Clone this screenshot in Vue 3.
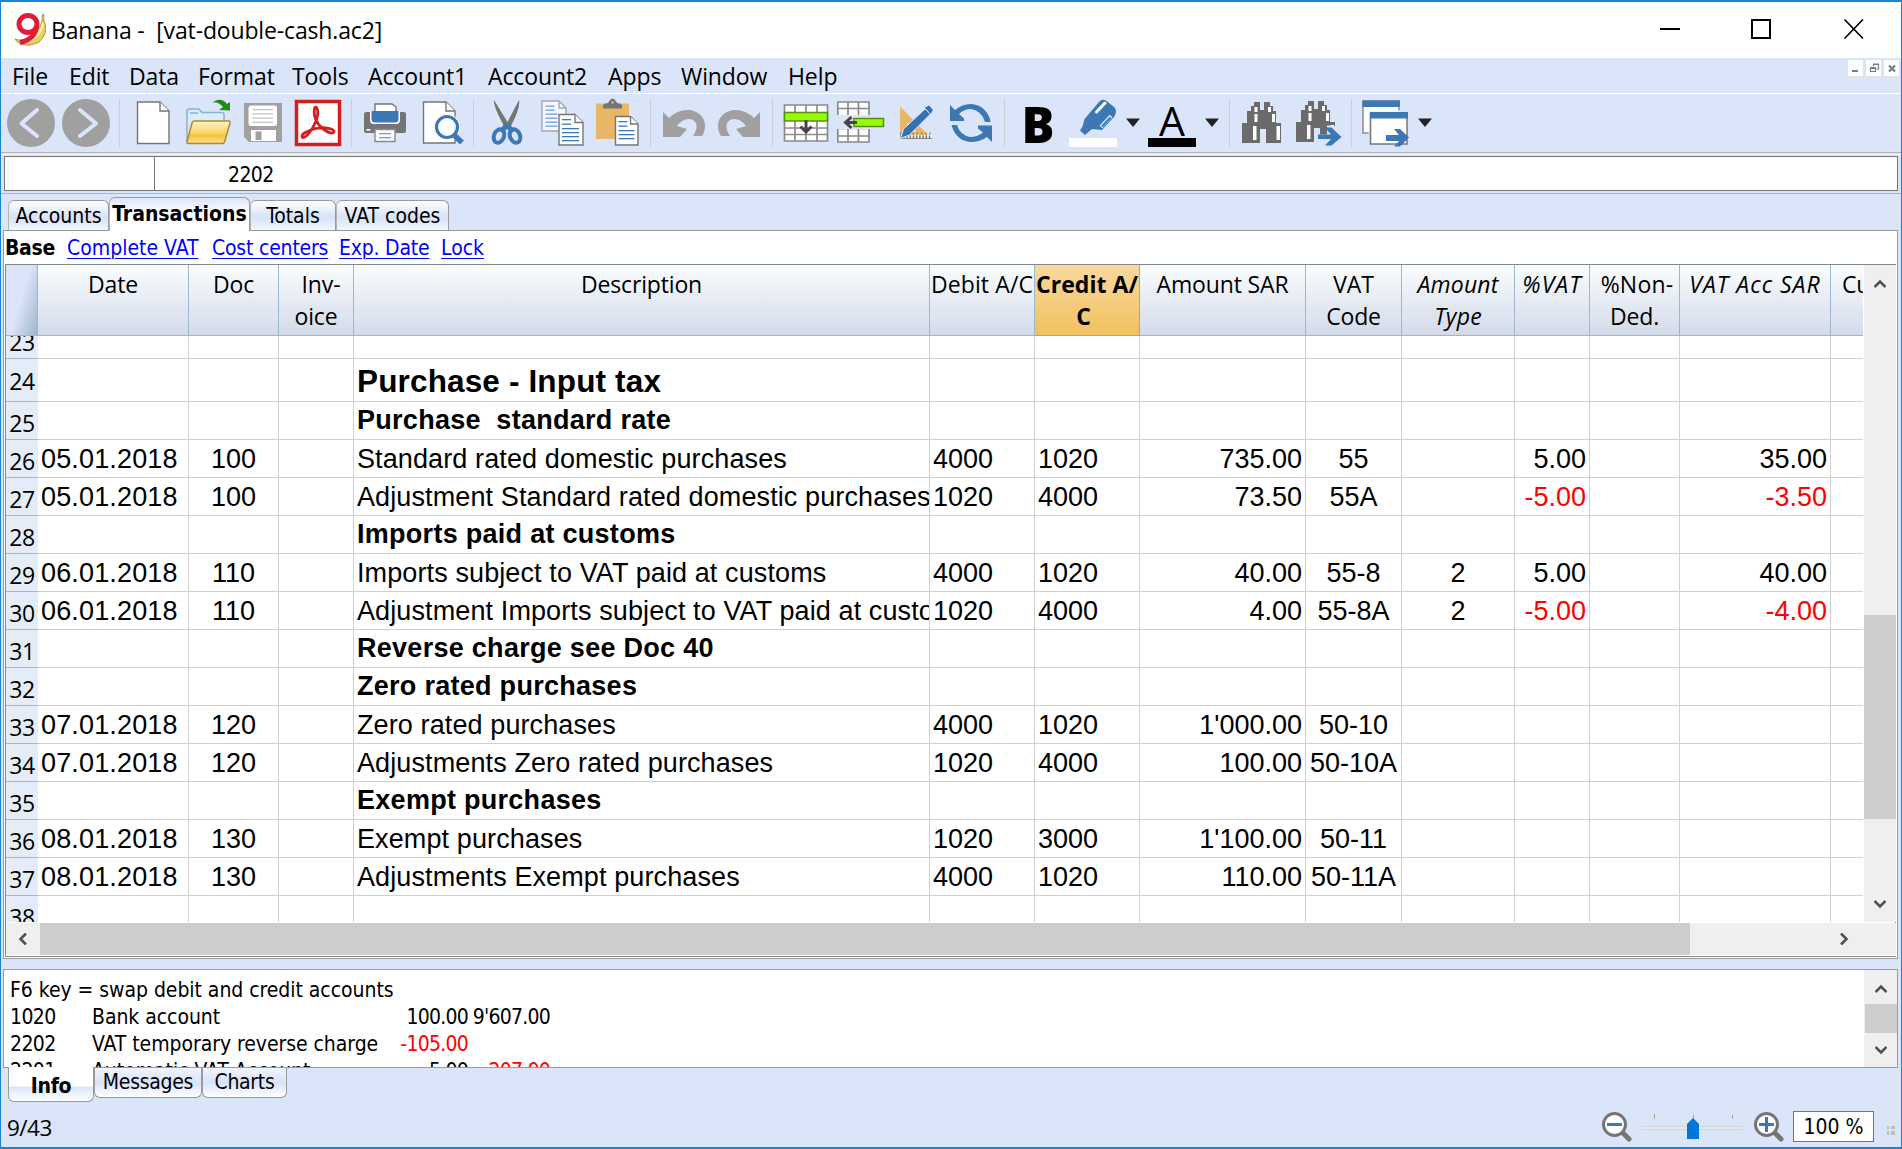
<script setup>
const menus = [
  { label: 'File', w: 57 }, { label: 'Edit', w: 60 }, { label: 'Data', w: 69 }, { label: 'Format', w: 94 },
  { label: 'Tools', w: 76 }, { label: 'Account1', w: 120 }, { label: 'Account2', w: 120 }, { label: 'Apps', w: 73 },
  { label: 'Window', w: 107 }, { label: 'Help', w: 60 }
]

const page = 'fill="#fff" stroke="#757575" stroke-width="1.4"'
const lines = (x, y, w, n, step, c = '#3c78b4') =>
  Array.from({ length: n }, (_, i) => `<rect x="${x}" y="${y + i * step}" width="${w}" height="1.3" fill="${c}"/>`).join('')
const binoculars = `
  <path fill="#6b6b6b" d="M15 4h6v4h3V4h0h7v4h3v5h3v12h5v20H27V31h-6v14H3V25h5V13h4V8h3z"/>
  <path fill="#dbe5f9" d="M21 3h4v9h-4z"/>
  <path fill="#fff" d="M15.500 9h3v5h-3zM29 9h3v5h-3zM15.500 16h3v8h-3zM33 16h3v8h-3zM14 28h3.500v14h-3.500zM37.500 28h3.500v14h-3.500z"/>`
const lens = (x, y, r) => `<circle cx="${x}" cy="${y}" r="${r}" fill="#fff" stroke="#3c78b4" stroke-width="3.2"/>`

const groups = [
  [
    { svg: '<circle cx="24" cy="24" r="24" fill="#a0a0a0"/><path d="M30 11L14.500 24.500L30 37" fill="none" stroke="#dbe5f9" stroke-width="4" stroke-linecap="round" stroke-linejoin="round"/>' },
    { svg: '<circle cx="24" cy="24" r="24" fill="#a0a0a0"/><path d="M18 11L34 24.500L18 37" fill="none" stroke="#dbe5f9" stroke-width="4" stroke-linecap="round" stroke-linejoin="round"/>' }
  ],
  [
    { svg: `<path d="M8.500 3H31L40 12V44.500H8.500z" ${page}/><path d="M31 3V12H40" ${page}/>` },
    { svg: `<defs><linearGradient id="fold" x1="0" y1="0" x2="0" y2="1"><stop offset="0" stop-color="#fdf3c4"/><stop offset=".5" stop-color="#fbd873"/><stop offset=".65" stop-color="#f5c33c"/><stop offset="1" stop-color="#fbe08c"/></linearGradient></defs>
      <path d="M3 12q0-2 2-2h10l3 3.500h20q2 0 2 2V43H3z" fill="#d8ecfb" stroke="#8fb0d0" stroke-width="1.500"/>
      <path d="M6 14h8" stroke="#8fc3f5" stroke-width="2"/>
      <path d="M10 22h35q1.500 0 1 2L40.500 43q-.5 1.500-2 1.500H4q-1.500 0-1-2L8 24q.5-2 2-2z" fill="url(#fold)" stroke="#b08a33" stroke-width="1.500"/>
      <path d="M28 3.500Q37-2.500 43 5L46 3V11.500L35 11L39 8Q34 2 28 3.500z" fill="#1f8a14"/>` },
    { svg: `<path d="M5 4H43V43H10L5 38z" fill="#a0a0a0"/><rect x="9.500" y="6.500" width="28.500" height="20.500" rx="2.500" fill="#fff"/>${lines(13.5, 10, 20.5, 4, 4.2, '#c4c4c4')}
      <rect x="12" y="31" width="25" height="11" fill="#fff"/><rect x="16.500" y="32.500" width="6" height="8.500" fill="#a0a0a0"/>` },
    { svg: `<rect x="2.500" y="2.500" width="43" height="43" fill="#fff" stroke="#d2201f" stroke-width="3.500"/>
      <path d="M20.500 9.500C22 5 26 12 22 22C18 32 12 39 8.500 38.500C6 36 12 32 21.500 29.500C31 27.500 41 30 40 33C38 36 30 32 25 26C20 19 19.500 14 20.500 9.500z" fill="none" stroke="#d2201f" stroke-width="2.800" stroke-linejoin="round"/>` }
  ],
  [
    { svg: `<path d="M14 14V5h17l4 3v6" fill="#fff" stroke="#757575" stroke-width="1.400"/><path d="M3 15q0-2 2-2H43q2 0 2 2V32q0 2-2 2H5q-2 0-2-2z" fill="#757575"/>
      <path d="M9 12H39V21q0 4-4 4H13q-4 0-4-4z" fill="#fff"/><path d="M10.500 12H37.500V20q0 3.500-3.500 3.500H14q-3.500 0-3.500-3.500z" fill="#3c78b4"/>
      <path d="M14 30.500H34V42.500H14z" fill="#fff" stroke="#8a8a8a" stroke-width="1.400"/>${lines(18, 34, 12, 2, 4, '#6f9fd0')}<rect x="5.500" y="30" width="4" height="1.600" fill="#fff"/>` },
    { svg: `<path d="M7.500 3H30L39 12V44H7.500z" ${page}/><path d="M30 3V12H39" ${page}/><circle cx="31" cy="28" r="13" fill="#fff"/>${lens(31, 28, 10.5)}<path d="M38.500 36.500L46 43.500" stroke="#3c78b4" stroke-width="5.500"/>` }
  ],
  [
    { svg: `<path d="M11 1Q10 7 22 29L27 29Q38 8 36 1L24.500 23z" fill="#757575"/><path d="M24 26L18 33M24 26L30 33" stroke="#3c78b4" stroke-width="5"/>
      <ellipse cx="16" cy="37" rx="5" ry="7" transform="rotate(22 16 37)" fill="none" stroke="#3c78b4" stroke-width="4"/><ellipse cx="32" cy="37" rx="5" ry="7" transform="rotate(-22 32 37)" fill="none" stroke="#3c78b4" stroke-width="4"/>` },
    { svg: `<path d="M4 2H21L28 9V32H4z" fill="#f4f7fd" stroke="#a0a8b8" stroke-width="1.400"/><path d="M21 2V9H28" fill="none" stroke="#a0a8b8" stroke-width="1.400"/>${lines(7.5, 6.5, 9, 2, 4, '#6f9fd0')}${lines(7.5, 14.5, 12, 4, 4, '#6f9fd0')}
      <path d="M21 15.500H37L45 23.500V46H21z" ${page}/><path d="M37 15.500V23.500H45" ${page}/>${lines(24, 20, 9, 2, 4.5)}${lines(24, 29, 17, 4, 4)}` },
    { svg: `<path d="M3 4.500H36V40H3z" fill="#e9b566"/><path d="M10 9.500V7q0-2 3-2.500q2 0 3-2q1.500-3 3.500-3t3.500 3q1 2 3 2q3 .5 3 2.500V9.500z" fill="#757575"/><circle cx="19.500" cy="3.500" r="1.300" fill="#e9b566"/>
      <path d="M22.500 17.500H37.500L45 25V46H22.500z" ${page}/><path d="M37.500 17.500V25H45" ${page}/>${lines(25.5, 22, 9, 2, 4.5)}${lines(25.5, 31, 16, 3, 4)}` }
  ],
  [
    { svg: '<path d="M3 13L9 19Q18 10 30 11Q44 14 45 26Q45 33 42 37H33Q37 31 36.500 26Q35 20 29 20Q22 20 17 27L27 30L20 38H3z" fill="#a0a0a0"/>' },
    { svg: '<path transform="translate(48 0) scale(-1 1)" d="M3 13L9 19Q18 10 30 11Q44 14 45 26Q45 33 42 37H33Q37 31 36.500 26Q35 20 29 20Q22 20 17 27L27 30L20 38H3z" fill="#a0a0a0"/>' }
  ],
  [
    { svg: `<rect x="2.500" y="6" width="43" height="36" fill="#fff"/><path d="M2.500 6H45.500V42H2.500zM13 6V42M24 6V42M35 6V42M2.500 29H45.500M2.500 35.500H45.500" fill="none" stroke="#8a8a8a" stroke-width="1.700"/>
      <rect x="2.500" y="13.500" width="43" height="8.500" fill="#96fa0a" stroke="#569010" stroke-width="1.500"/><path d="M24 21V32M18.500 27.500L24 33L29.500 27.500" fill="none" stroke="#444" stroke-width="3"/>` },
    { svg: `<path d="M0 3H32V16H0zM0 31H32V43H0z" fill="#fff"/><path d="M.8 16V3H32V16M.8 9.500H32M11 3V16M21.500 3V16M.8 30V43H32V30M.8 37H32M11 30V43M21.500 30V43" fill="none" stroke="#8a8a8a" stroke-width="1.700"/>
      <rect x="17" y="19.500" width="29.500" height="8" fill="#96fa0a" stroke="#569010" stroke-width="1.500"/><path d="M20 23.500H9M14.500 18L8.500 23.500L14.500 29" fill="none" stroke="#444" stroke-width="3"/>` },
    { svg: `<path d="M8 7.500V40H40zM15 23.500V33H24z" fill="#e9b566" fill-rule="evenodd"/><path d="M8 34.500H40" stroke="#757575" stroke-width="2" stroke-dasharray="1.200 3"/><path d="M8 36.500H40V40H8z" fill="#757575"/><path d="M9.500 37.500H40" stroke="#fff" stroke-width="3.500" stroke-dasharray="1.600 1.600"/>
      <path d="M8.500 39.500L11.500 30L33 10L38.500 15L17.500 36z" fill="#3472b2" stroke="#dbe5f9" stroke-width="1"/><path d="M34 9L37 7.500L40 11L38.500 13.500z" fill="#3472b2" stroke="#3472b2" stroke-width="1.500"/>` },
    { svg: `<path d="M3 6L8 11Q15 5 24 5Q38 6 43 20L43.500 23H38Q35 12 24 10Q17 10 12 15L17 19.500V22H3z" fill="#3c78b4"/>
      <path d="M45 43L40 38Q33 43 24 43Q9 42 4.500 26H10Q13 36 23 38Q30 38 36 33.500L31 29.500V26.500H45z" fill="#3c78b4"/>` }
  ],
  [
    { letter: 'B', kind: 'bold' },
    { menu: true, svg: '<path d="M30 3Q33-.5 37 1.500L45 8Q48 11 46.500 15L45 18L33 31L23 30L16 36L11 31.500L13.500 27.500L15.500 20z" fill="#3c78b4"/><path d="M27.500 13L36 4" stroke="#fff" stroke-width="3" stroke-linecap="round"/><path d="M32 28L42 17" stroke="#dbe5f9" stroke-width="4"/><path d="M33 27.500L41.500 18.500" stroke="#3c78b4" stroke-width="2"/><rect x="0" y="39" width="48" height="9" fill="#fff"/>' },
    { menu: true, letter: 'A', kind: 'ink' }
  ],
  [
    { svg: `<g transform="translate(0 -1)">${binoculars}</g>` },
    { svg: `<g transform="translate(-1 -2)">${binoculars}</g><path d="M22 35.500H33V26.500H40L50 37.500L40 48H28L22 43z" fill="#dbe5f9"/><path d="M24 35.500H37L31 28.500H37.500L47.500 38L37.500 46.500H31L37 40H24z" fill="#3c78b4"/>` }
  ],
  [
    { menu: true, svg: `<rect x="2" y="2" width="36" height="32" fill="#fff" stroke="#8a8a8a" stroke-width="1.500"/><rect x="1.500" y="1.500" width="37.500" height="6.500" fill="#3c78b4"/>
      <rect x="7.500" y="11.500" width="32" height="23" fill="#eef3fc"/><rect x="9.500" y="14.500" width="36.500" height="30.500" fill="#fff" stroke="#757575" stroke-width="1.500"/><rect x="9" y="13" width="38" height="6.500" fill="#3c78b4"/>
      <path d="M25 36H38L33 30H39L48 38.500L39 47.500H33L38 42H25z" fill="#3c78b4"/>` }
  ]
]

const tabs = [
  { label: 'Accounts', w: 101 }, { label: 'Transactions', w: 141, active: true }, { label: 'Totals', w: 86 }, { label: 'VAT codes', w: 113 }
]
const views = [{ label: 'Complete VAT', w: 145 }, { label: 'Cost centers', w: 127, tight: true }, { label: 'Exp. Date', w: 102, tight: true }, { label: 'Lock', w: 50 }]

const columns = [
  { key: 'date', head: ['Date'], w: 151, align: 'left' },
  { key: 'doc', head: ['Doc'], w: 90, align: 'center' },
  { key: 'inv', head: ['Inv-', 'oice'], w: 75, align: 'center' },
  { key: 'desc', head: ['Description'], w: 576, align: 'left' },
  { key: 'debit', head: ['Debit A/C'], w: 105, align: 'left' },
  { key: 'credit', head: ['Credit A/', 'C'], w: 105, align: 'left', selected: true },
  { key: 'amount', head: ['Amount SAR'], w: 166, align: 'right' },
  { key: 'code', head: ['VAT', 'Code'], w: 96, align: 'center' },
  { key: 'type', head: ['Amount', 'Type'], w: 113, align: 'center', italic: true },
  { key: 'pct', head: ['%VAT'], w: 75, align: 'right', italic: true },
  { key: 'non', head: ['%Non-', 'Ded.'], w: 90, align: 'right' },
  { key: 'acc', head: ['VAT Acc SAR'], w: 151, align: 'right', italic: true },
  { key: 'cur', head: ['Cu'], w: 32, align: 'left' }
]

const rows = [
  { n: 23, first: true },
  { n: 24, desc: 'Purchase - Input tax', big: true },
  { n: 25, desc: 'Purchase\u00a0 standard rate', bold: true },
  { n: 26, date: '05.01.2018', doc: '100', desc: 'Standard rated domestic purchases', debit: '4000', credit: '1020', amount: '735.00', code: '55', pct: '5.00', acc: '35.00' },
  { n: 27, date: '05.01.2018', doc: '100', desc: 'Adjustment Standard rated domestic purchases', debit: '1020', credit: '4000', amount: '73.50', code: '55A', pct: '-5.00', acc: '-3.50' },
  { n: 28, desc: 'Imports paid at customs', bold: true },
  { n: 29, date: '06.01.2018', doc: '110', desc: 'Imports subject to VAT paid at customs', debit: '4000', credit: '1020', amount: '40.00', code: '55-8', type: '2', pct: '5.00', acc: '40.00' },
  { n: 30, date: '06.01.2018', doc: '110', desc: 'Adjustment Imports subject to VAT paid at customs', debit: '1020', credit: '4000', amount: '4.00', code: '55-8A', type: '2', pct: '-5.00', acc: '-4.00' },
  { n: 31, desc: 'Reverse charge see Doc 40', bold: true },
  { n: 32, desc: 'Zero rated purchases', bold: true },
  { n: 33, date: '07.01.2018', doc: '120', desc: 'Zero rated purchases', debit: '4000', credit: '1020', amount: "1'000.00", code: '50-10' },
  { n: 34, date: '07.01.2018', doc: '120', desc: 'Adjustments Zero rated purchases', debit: '1020', credit: '4000', amount: '100.00', code: '50-10A' },
  { n: 35, desc: 'Exempt purchases', bold: true },
  { n: 36, date: '08.01.2018', doc: '130', desc: 'Exempt purchases', debit: '1020', credit: '3000', amount: "1'100.00", code: '50-11' },
  { n: 37, date: '08.01.2018', doc: '130', desc: 'Adjustments Exempt purchases', debit: '4000', credit: '1020', amount: '110.00', code: '50-11A' },
  { n: 38 }
]

const info = [
  ['1020', 'Bank account', '100.00', "9'607.00"],
  ['2202', 'VAT temporary reverse charge', '-105.00', ''],
  ['2201', 'Automatic VAT Account', '5.00', '-207.00']
]
const negative = (v) => typeof v === 'string' && /^-\d/.test(v)
</script>

<template>
  <div class="window">
    <header class="titlebar">
      <svg class="logo" width="32" height="33" viewBox="0 0 32 33">
        <path d="M28.500 1l1.500 1q-1 5 1 9q3 10-6 18q-9 5-18 2q-4-1-6-5q8 3 14-2q12-8 13-16z" fill="#e8d25c" stroke="#9c8430" stroke-width=".8" />
        <path d="M29 10Q27 24 12 30" fill="none" stroke="#fbf3b0" stroke-width="2" />
        <path d="M22.500 12Q22 26 6 29.500" fill="none" stroke="#e01c38" stroke-width="5" />
        <ellipse cx="14" cy="11" rx="9" ry="8.500" fill="#fff" stroke="#e01c38" stroke-width="5" />
      </svg>
      <span class="caption">Banana - &nbsp;[vat-double-cash.ac2]</span>
      <svg class="winbtns" width="204" height="20" viewBox="0 0 204 20">
        <path d="M0 10H20M92 1H110V19H92z" fill="none" stroke="#000" stroke-width="2" />
        <path d="M184.500.5L203 19.500M203 .5L184.500 19.500" stroke="#000" stroke-width="1.600" />
      </svg>
    </header>

    <nav class="menubar">
      <span v-for="m in menus" :key="m.label" :style="{ width: m.w + 'px' }">{{ m.label }}</span>
      <svg class="mdi" width="53" height="18" viewBox="0 0 53 18">
        <path d="M.5.5H16.500V17.500H.5zM18.500.5H34.500V17.500H18.500zM36.500.5H52.500V17.500H36.500z" fill="#fff" stroke="#e6e3df" />
        <path d="M5 12H11" stroke="#708090" stroke-width="2" />
        <path d="M23.500 9.500H28.500V12.500H23.500zM23 8.500H29M26.500 7V5.500H31.500V10H29.500M26 5H32" fill="none" stroke="#708090" stroke-width="1.200" />
        <path d="M42 6.500L48 12.500M48 6.500L42 12.500" stroke="#708090" stroke-width="2.200" />
      </svg>
    </nav>

    <div class="toolbar">
      <template v-for="(g, gi) in groups" :key="gi">
        <i v-if="gi" class="sep"></i>
        <template v-for="(b, bi) in g" :key="bi">
          <span v-if="b.letter" class="btn glyph" :class="b.kind">{{ b.letter }}</span>
          <svg v-else class="btn" width="48" height="48" viewBox="0 0 48 48" v-html="b.svg"></svg>
          <svg v-if="b.menu" class="drop" width="14" height="9" viewBox="0 0 14 9"><path d="M0 .5H14L7 9z" fill="#222" /></svg>
        </template>
      </template>
    </div>

    <div class="inputrow">
      <div class="ref"></div>
      <div class="entry">2202</div>
    </div>

    <div class="tabs">
      <span v-for="t in tabs" :key="t.label" class="tab" :class="{ active: t.active }" :style="{ width: t.w + 'px' }">{{ t.label }}</span>
    </div>

    <main class="page">
      <div class="views">
        <b>Base</b>
        <span v-for="v in views" :key="v.label" :class="{ tight: v.tight }" :style="{ width: v.w + 'px' }"><a>{{ v.label }}</a></span>
      </div>
      <div class="table">
        <div class="sheet">
          <div class="row head">
            <div class="corner"></div>
            <div v-for="c in columns" :key="c.key" class="hcell" :class="{ selected: c.selected, italic: c.italic, ['h-' + c.key]: true }" :style="{ width: c.w + 'px' }">
              <div v-for="l in c.head" :key="l">{{ l }}</div>
            </div>
          </div>
          <div class="body">
            <div v-for="r in rows" :key="r.n" class="row" :class="{ first: r.first, big: r.big, strong: r.bold }">
              <div class="num">{{ r.n }}</div>
              <div v-for="c in columns" :key="c.key" class="cell" :class="[c.align, 'c-' + c.key, { neg: negative(r[c.key]) }]" :style="{ width: c.w + 'px' }">{{ r[c.key] }}</div>
            </div>
          </div>
        </div>
        <div class="vscroll">
          <svg width="12" height="9" viewBox="0 0 12 9"><path d="M.5 8L6 2.500L11.500 8" /></svg>
          <div class="vthumb"></div>
          <svg width="12" height="9" viewBox="0 0 12 9"><path d="M.5 1L6 6.500L11.500 1" /></svg>
        </div>
        <div class="hscroll">
          <svg width="9" height="12" viewBox="0 0 9 12"><path d="M8 .5L2.500 6L8 11.500" /></svg>
          <div class="hthumb"></div>
          <svg width="9" height="12" viewBox="0 0 9 12"><path d="M1 .5L6.500 6L1 11.500" /></svg>
        </div>
      </div>
    </main>

    <section class="info">
      <div class="infotext">
        <div>F6 key = swap debit and credit accounts</div>
        <div v-for="l in info" :key="l[0]" class="line">
          <span class="acct">{{ l[0] }}</span><span class="name">{{ l[1] }}</span>
          <span class="v1" :class="{ neg: negative(l[2]) }">{{ l[2] }}</span><span class="v2" :class="{ neg: negative(l[3]) }">{{ l[3] }}</span>
        </div>
      </div>
      <div class="infoscroll">
        <svg width="12" height="9" viewBox="0 0 12 9"><path d="M.5 8L6 2.500L11.500 8" /></svg>
        <div class="ithumb"></div>
        <svg width="12" height="9" viewBox="0 0 12 9"><path d="M.5 1L6 6.500L11.500 1" /></svg>
      </div>
    </section>

    <div class="bottomtabs">
      <span class="btab on">Info</span><span class="btab msg">Messages</span><span class="btab">Charts</span>
    </div>

    <footer class="status">
      <span class="pos">9/43</span>
      <svg width="30" height="30" viewBox="0 0 30 30">
        <path d="M20 20L27 27" stroke="#757575" stroke-width="5" stroke-linecap="round" /><circle cx="12.500" cy="12.500" r="11" fill="#fff" stroke="#757575" stroke-width="3" /><path d="M5 12.500H20" stroke="#3c78b4" stroke-width="3" />
      </svg>
      <svg class="slider" width="100" height="30" viewBox="0 0 100 30">
        <path d="M11.500 2V7M50.500 3V7M89.500 3V7" stroke="#a8a490" /><rect x=".5" y="14.500" width="99" height="3" fill="#e7eaea" stroke="#d6d6d6" />
        <path d="M44 12L50 6L56 12V27H44z" fill="#0078d7" />
      </svg>
      <svg width="30" height="30" viewBox="0 0 30 30">
        <path d="M20 20L27 27" stroke="#757575" stroke-width="5" stroke-linecap="round" /><circle cx="12.500" cy="12.500" r="11" fill="#fff" stroke="#757575" stroke-width="3" /><path d="M5 12.500H20M12.500 5V20" stroke="#3c78b4" stroke-width="3" />
      </svg>
      <span class="zoom">100 %</span>
      <svg class="grip" width="8" height="9" viewBox="0 0 8 9"><path d="M0 0H2V3H0zM4 0H8V3H4zM0 5H2V9H0zM4 5H8V9H4z" fill="#bdbdbd" /></svg>
    </footer>
  </div>
</template>

<style>
body { margin: 0; background: #dbe5f9; }
</style>

<style scoped>
.window {
  --ui: "Open Sans", "Noto Sans", sans-serif;
  --small: "DejaVu Sans Condensed", "DejaVu Sans", sans-serif;
  box-sizing: border-box; width: 1902px; height: 1149px; overflow: hidden;
  display: flex; flex-direction: column;
  border: solid #1883d7; border-width: 2px 1px;
  background: #dbe5f9; color: #000; font-family: var(--ui); white-space: nowrap;
}
.window * { box-sizing: border-box; }
.window > * { flex: none; }

.titlebar { height: 56px; background: #fff; display: flex; align-items: center; padding-left: 13px; }
.logo { margin-top: -1px; }
.caption { font-size: 23px; margin: 0 0 0 5px; flex: 1; letter-spacing: -.15px; }
.winbtns { margin: -2px 37px 0 0; }

.menubar { height: 36px; border-bottom: 1px solid #fff; display: flex; padding-left: 11px; font-size: 23px; line-height: 37px; letter-spacing: -.1px; }
.mdi { margin: 1px 1px 0 auto; }

.toolbar { height: 59px; padding: 5px 0 0 6px; display: flex; border-bottom: 1px solid #b4b4b4; }
.btn { width: 48px; height: 48px; margin-right: 7px; flex: none; overflow: visible; }
.sep { width: 1px; height: 48px; background: #cdd0d4; margin: 0 9px 0 2px; }
.drop { margin: 19px 8px 0 2px; }
.glyph { text-align: center; }
.bold { font: 800 49px/51px "Open Sans", sans-serif; }
.ink { font: 41px/43px "Open Sans", sans-serif; border-bottom: 9px solid #000; }

.inputrow { height: 40px; margin-top: 1px; border-top: 1px solid #f4f8ff; border-bottom: 1px solid #b4b4b4; padding: 1px 3px 2px; display: flex; font: 21px/36px var(--small); }
.ref { width: 151px; border: 1px solid #757575; background: #fff; }
.entry { flex: 1; border: 1px solid #757575; border-left: 0; background: #fff; padding-left: 73px; letter-spacing: -.6px; }

.tabs { height: 36px; display: flex; align-items: flex-end; padding-left: 7px; font: 21px/30px var(--small); }
.tab { height: 30px; text-align: center; border: 1px solid #9a9a9a; border-bottom: 0; border-left-color: #b5b5b5; border-radius: 6px 6px 0 0; background: linear-gradient(#fff, #dbe5f9 50%, #d8e2f8 60%, #f2f6fe); }
.tab.active { height: 34px; line-height: 32px; margin-bottom: -1px; font-weight: bold; background: linear-gradient(#dbe5f9, #fff 45%); position: relative; z-index: 1; }

.page { height: 729px; margin: 0 3px 0 2px; border: 1px solid #9a9a9a; background: #fff; padding: 0 1px 1px; }
.views { height: 33px; display: flex; font: 21px/34px var(--small); }
.views b { width: 62px; letter-spacing: -.3px; }
.views a { color: #00f; text-decoration: underline; text-decoration-thickness: 1px; text-underline-offset: 3px; }
.tight { letter-spacing: -.2px; }

.table { height: 693px; border: 1px solid #828790; display: grid; grid-template: 657px 34px / 1857px 33px; }
.sheet { overflow: hidden; display: flex; flex-direction: column; }
.row { display: flex; height: 38px; flex: none; }
.head { height: 71px; font-size: 23px; line-height: 32px; letter-spacing: -.15px; }
.corner { width: 32px; border-right: 1px solid #9eb6ce; border-bottom: 1px solid #9eb6ce; background: linear-gradient(107deg, #dbe5f9 48%, #c4d2e8 68%, #9eb6ce); }
.hcell { flex: none; text-align: center; overflow: hidden; padding-top: 3px; border-right: 1px solid #9eb6ce; border-bottom: 1px solid #9eb6ce; background: linear-gradient(#fafdfe, #d3daea); }
.hcell div { height: 32px; }
.hcell.selected { background: linear-gradient(#f9d99f, #f1c15f); border-color: #f29536; font-weight: bold; letter-spacing: .05px; }
.h-credit div:last-child { padding-right: 7px; }
.italic { font-style: italic; letter-spacing: .2px; }
.h-debit { letter-spacing: .1px; }
.h-inv div:first-child { padding-left: 10px; }
.h-non div:first-child { padding-left: 5px; letter-spacing: .2px; }
.h-acc, .h-pct { letter-spacing: 1px; }
.h-cur { border-right: 0; text-align: left; padding-left: 11px; }
.body { flex: 1; overflow: hidden; }
.row.first { margin-top: -15px; }
.row.big { height: 43px; }
.num { width: 32px; flex: none; background: #e4ecf7; border-bottom: 1px solid #9eb6ce; font-size: 23px; line-height: 43px; text-align: center; letter-spacing: -.5px; }
.big .num { line-height: 45px; }
.cell { flex: none; overflow: hidden; border-right: 1px solid #d0d0d0; border-bottom: 1px solid #d0d0d0; font: 27px/38px "Liberation Sans", Arial, sans-serif; padding: 0 3px; white-space: pre; }
.left { text-align: left; }
.center { text-align: center; }
.right { text-align: right; }
.c-date { letter-spacing: .15px; }
.c-desc { padding-right: 0; letter-spacing: .11px; }
.c-code { padding: 0; }
.c-cur { border-right: 0; }
.strong .cell { font-weight: bold; line-height: 36px; letter-spacing: .28px; }
.big .cell { font-weight: bold; font-size: 31.500px; line-height: 44px; letter-spacing: .15px; }
.neg { color: #f00; }

.vscroll, .infoscroll { background: #efefef; display: flex; flex-direction: column; align-items: center; }
.vscroll { margin-left: 1px; padding: 14px 0 13px; }
.vthumb { width: 32px; height: 204px; background: #cdcdcd; margin: 327px 0 auto; }
.hscroll { grid-column: 1 / 3; margin-top: 1px; background: #efefef; display: flex; align-items: center; padding: 0 47px 0 12px; border-bottom: 1px solid #fff; }
.hthumb { height: 32px; width: 1650px; background: #cdcdcd; margin: 0 auto 0 13px; }
.table path, .infoscroll path { fill: none; stroke: #505050; stroke-width: 2.600; }

.info { height: 99px; margin: 10px 3px 0 2px; border: 1px solid #9a9a9a; background: #fff; display: flex; overflow: hidden; }
.infotext { flex: 1; padding: 7px 0 0 6px; font: 21px/27px var(--small); letter-spacing: -.05px; }
.line { display: flex; }
.acct { width: 82px; letter-spacing: -.6px; }
.name { width: 288px; }
.v1 { width: 88px; text-align: right; letter-spacing: -.75px; }
.v2 { width: 82px; text-align: right; letter-spacing: -.75px; }
.infoscroll { width: 33px; padding: 14px 0 12px; }
.ithumb { width: 32px; height: 29px; background: #cdcdcd; margin: 11px 0 auto; }

.bottomtabs { height: 34px; display: flex; align-items: flex-start; padding-left: 7px; font: 21px/29px var(--small); }
.btab { height: 30px; width: 85px; text-align: center; border: 1px solid #9a9a9a; border-top: 0; border-radius: 0 0 6px 6px; background: linear-gradient(#f0f4fd, #d8e2f8 50%, #fff); letter-spacing: -.3px; }
.btab.msg { width: 108px; }
.btab.on { width: 86px; height: 35px; margin-top: -1px; line-height: 38px; font-weight: bold; background: linear-gradient(#fff 55%, #dbe5f9 60%, #fff); position: relative; }

.status { height: 45px; display: flex; align-items: flex-start; padding: 10px 6px 0 6px; }
.pos { font-size: 22.500px; line-height: 32px; letter-spacing: -.5px; margin-right: auto; }
.slider { margin: 0 11px; }
.zoom { width: 81px; height: 31px; margin: -1px 13px 0 9px; border: 1px solid #757575; background: #fff; text-align: center; font: 21px/30px var(--small); }
.grip { align-self: flex-end; margin: 0 0 12px; }
</style>
